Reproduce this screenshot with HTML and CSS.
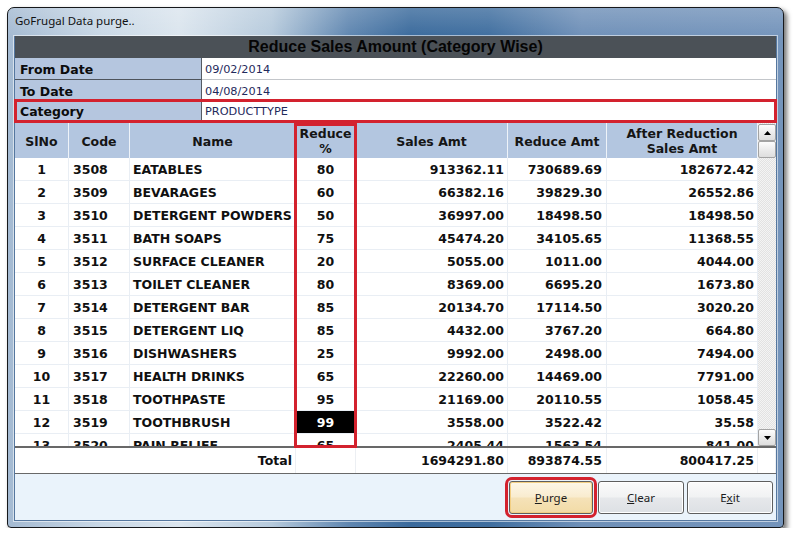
FILE: index.html
```html
<!DOCTYPE html>
<html>
<head>
<meta charset="utf-8">
<link rel="stylesheet" href="styles.css">
</head>
<body>
<div class="window">
  <div class="titlebar">GoFrugal Data purge..</div>
  <div class="client">
    <div class="caption">Reduce Sales Amount (Category Wise)</div>
    <div class="info-row from"><div class="lbl">From Date</div><div class="val">09/02/2014</div></div>
    <div class="info-row to"><div class="lbl">To Date</div><div class="val">04/08/2014</div></div>
    <div class="info-row cat"><div class="lbl">Category</div><div class="val">PRODUCTTYPE</div></div>
    <div class="gridwrap">
      <div class="gmain">
        <div class="ghead">
          <div>SlNo</div><div>Code</div><div>Name</div><div>Reduce<br>%</div><div>Sales Amt</div><div>Reduce Amt</div><div>After Reduction<br>Sales Amt</div>
        </div>
        <div class="gbody">
          <div class="row"><div class="c">1</div><div class="l">3508</div><div class="l">EATABLES</div><div class="c">80</div><div class="r">913362.11</div><div class="r">730689.69</div><div class="r">182672.42</div></div>
          <div class="row"><div class="c">2</div><div class="l">3509</div><div class="l">BEVARAGES</div><div class="c">60</div><div class="r">66382.16</div><div class="r">39829.30</div><div class="r">26552.86</div></div>
          <div class="row"><div class="c">3</div><div class="l">3510</div><div class="l">DETERGENT POWDERS</div><div class="c">50</div><div class="r">36997.00</div><div class="r">18498.50</div><div class="r">18498.50</div></div>
          <div class="row"><div class="c">4</div><div class="l">3511</div><div class="l">BATH SOAPS</div><div class="c">75</div><div class="r">45474.20</div><div class="r">34105.65</div><div class="r">11368.55</div></div>
          <div class="row"><div class="c">5</div><div class="l">3512</div><div class="l">SURFACE CLEANER</div><div class="c">20</div><div class="r">5055.00</div><div class="r">1011.00</div><div class="r">4044.00</div></div>
          <div class="row"><div class="c">6</div><div class="l">3513</div><div class="l">TOILET CLEANER</div><div class="c">80</div><div class="r">8369.00</div><div class="r">6695.20</div><div class="r">1673.80</div></div>
          <div class="row"><div class="c">7</div><div class="l">3514</div><div class="l">DETERGENT BAR</div><div class="c">85</div><div class="r">20134.70</div><div class="r">17114.50</div><div class="r">3020.20</div></div>
          <div class="row"><div class="c">8</div><div class="l">3515</div><div class="l">DETERGENT LIQ</div><div class="c">85</div><div class="r">4432.00</div><div class="r">3767.20</div><div class="r">664.80</div></div>
          <div class="row"><div class="c">9</div><div class="l">3516</div><div class="l">DISHWASHERS</div><div class="c">25</div><div class="r">9992.00</div><div class="r">2498.00</div><div class="r">7494.00</div></div>
          <div class="row"><div class="c">10</div><div class="l">3517</div><div class="l">HEALTH DRINKS</div><div class="c">65</div><div class="r">22260.00</div><div class="r">14469.00</div><div class="r">7791.00</div></div>
          <div class="row"><div class="c">11</div><div class="l">3518</div><div class="l">TOOTHPASTE</div><div class="c">95</div><div class="r">21169.00</div><div class="r">20110.55</div><div class="r">1058.45</div></div>
          <div class="row"><div class="c">12</div><div class="l">3519</div><div class="l">TOOTHBRUSH</div><div class="c sel">99</div><div class="r">3558.00</div><div class="r">3522.42</div><div class="r">35.58</div></div>
          <div class="row"><div class="c">13</div><div class="l">3520</div><div class="l">PAIN RELIEF</div><div class="c">65</div><div class="r">2405.44</div><div class="r">1563.54</div><div class="r">841.00</div></div>
        </div>
      </div>
      <div class="vscroll">
        <div class="sb-btn"><svg width="7" height="4" viewBox="0 0 7 4"><path d="M0 4 L3.5 0 L7 4 Z" fill="#000"/></svg></div>
        <div class="sb-thumb"></div>
        <div class="sb-track"></div>
        <div class="sb-btn"><svg width="7" height="4" viewBox="0 0 7 4"><path d="M0 0 L7 0 L3.5 4 Z" fill="#000"/></svg></div>
      </div>
      <div class="col-mark"></div>
    </div>
    <div class="total-row">
      <div class="r">Total</div><div></div><div class="r">1694291.80</div><div class="r">893874.55</div><div class="r">800417.25</div><div></div>
    </div>
    <div class="actions">
      <button class="btn purge"><u>P</u>urge</button>
      <button class="btn clear"><u>C</u>lear</button>
      <button class="btn exit">E<u>x</u>it</button>
    </div>
  </div>
</div>
</body>
</html>
```
FILE: styles.css
```css
* { box-sizing: border-box; }
body {
  margin: 0;
  background: #ffffff;
  font-family: "DejaVu Sans", Verdana, sans-serif;
}
.window {
  margin: 7px 0 0 7px;
  width: 777px;
  height: 521px;
  border: 1px solid #16181b;
  border-radius: 7px 7px 4px 4px;
  box-shadow: 3px 3px 5px rgba(0, 0, 0, 0.55);
  background:
    linear-gradient(180deg, rgba(255,255,255,0.18) 0px, rgba(255,255,255,0) 30px),
    linear-gradient(90deg, #a4bad2 0%, #c9d8e6 12%, #dbe5ee 22%, #b6cadc 34%, #5f86b0 44%, #3a6a9c 52%, #3f6e9f 62%, #6f90b8 74%, #7494bb 100%);
  display: flex;
  flex-direction: column;
  padding: 0 6px 6px 6px;
}
.titlebar {
  height: 28px;
  padding-left: 1px;
  font-family: "Noto Sans", "Open Sans", sans-serif;
  font-size: 11.5px;
  line-height: 26px;
  color: #111;
}
.client {
  height: 485px;
  background: #eaf3fb;
  border: 1px solid #55779f;
  border-top: none;
  box-shadow: 0 0 0 1px rgba(255,255,255,0.55);
  display: flex;
  flex-direction: column;
}
.caption {
  height: 22px;
  background: #4b5157;
  font-family: "Liberation Sans", Arial, sans-serif;
  font-weight: bold;
  font-size: 16px;
  line-height: 22px;
  text-align: center;
  color: #050505;
}
.info-row {
  display: flex;
  background: #fff;
}
.lbl {
  width: 187px;
  background: #b5c6df;
  border-right: 1px solid #555b63;
  padding-left: 5px;
  padding-top: 1px;
  font-weight: bold;
  font-size: 12.5px;
  color: #0c0c0c;
}
.val {
  flex: 1;
  padding-left: 3px;
  padding-top: 1px;
  font-size: 11.3px;
  color: #1f2a5c;
}
.info-row.from { height: 22px; }
.info-row.from .lbl { border-bottom: 1px solid #4e545c; line-height: 21px; }
.info-row.from .val { border-bottom: 1px solid #c3c6ca; line-height: 21px; }
.info-row.to { height: 19px; }
.info-row.to .lbl, .info-row.to .val { line-height: 21px; }
.info-row.cat {
  height: 24px;
  margin: 0 -1px;
  border: 3px solid #d3222e;
}
.info-row.cat .lbl { width: 185px; padding-left: 3px; line-height: 18px; }
.info-row.cat .val { line-height: 18px; }

.gridwrap {
  position: relative;
  display: flex;
  height: 325px;
  border-bottom: 2px solid #686868;
}
.gmain { width: 743px; }
.ghead, .row {
  display: grid;
  grid-template-columns: 54px 61px 166px 60px 152px 99px 151px;
}
.ghead {
  height: 35px;
  background: #b3c6e0;
}
.ghead > div {
  border-right: 1px solid #eef3f9;
  display: flex;
  align-items: center;
  justify-content: center;
  padding-top: 1px;
  text-align: center;
  font-weight: bold;
  font-size: 12.5px;
  line-height: 15px;
  color: #151515;
}
.gbody {
  height: 288px;
  overflow: hidden;
  background: #fff;
}
.row {
  height: 23px;
  border-bottom: 1px solid #e9eef4;
}
.row > div {
  border-right: 1px solid #e9eef4;
  padding-top: 1px;
  line-height: 22px;
  font-weight: bold;
  font-size: 12.5px;
  color: #101010;
  white-space: nowrap;
  overflow: hidden;
}
.c { text-align: center; }
.l { padding-left: 3px; }
.row > .l:nth-child(2) { padding-left: 4px; }
.r { text-align: right; padding-right: 3px; }
.row > .r:nth-child(6) { padding-right: 4px; }
.row > .sel { background: #000; color: #fff; }

.vscroll {
  width: 18px;
  display: flex;
  flex-direction: column;
  padding-top: 1px;
  background: repeating-conic-gradient(#f4f4f4 0% 25%, #e2e2e2 0% 50%) 0 0 / 2px 2px;
}
.sb-btn, .sb-thumb {
  height: 17px;
  border: 1px solid #a3a3a3;
  border-radius: 2px;
  background: linear-gradient(180deg, #fdfdfd, #ececec 50%, #dedede);
  display: flex;
  align-items: center;
  justify-content: center;
}
.sb-track { flex: 1; }
.col-mark {
  position: absolute;
  left: 279px;
  top: 0;
  width: 63px;
  height: 325px;
  border: 3px solid #d3222e;
  pointer-events: none;
}

.total-row {
  display: grid;
  grid-template-columns: 281px 60px 152px 99px 151px 18px;
  height: 26px;
  background: #fff;
  border-bottom: 1px solid #686868;
}
.total-row > div {
  border-right: 1px solid #eceff3;
  padding-top: 1px;
  line-height: 24px;
  font-weight: bold;
  font-size: 12.5px;
  color: #101010;
}
.total-row > .r:nth-child(4) { padding-right: 4px; }

.actions {
  flex: 1;
  display: flex;
  justify-content: flex-end;
  align-items: flex-start;
  padding-top: 7px;
}
.btn {
  height: 33px;
  width: 86px;
  margin: 0 3px 0 0;
  padding: 0;
  border: 1px solid #5e5e5e;
  border-radius: 3px;
  background: linear-gradient(180deg, #fbfbfb, #f1f2f3 48%, #e6e8eb 52%, #dde0e4);
  box-shadow: inset 0 0 0 1px #ffffff;
  font-family: "Noto Sans", "Open Sans", sans-serif;
  font-size: 11.5px;
  color: #1c1c1c;
}
.btn.purge {
  width: 84px;
  margin-right: 5px;
  background: linear-gradient(180deg, #fdf7e8, #f9eccf 48%, #f5e2b8 52%, #f2dba6);
  box-shadow: inset 0 0 0 1px #f3cf82;
  outline: 3px solid #d3222e;
  outline-offset: 1px;
}
```
